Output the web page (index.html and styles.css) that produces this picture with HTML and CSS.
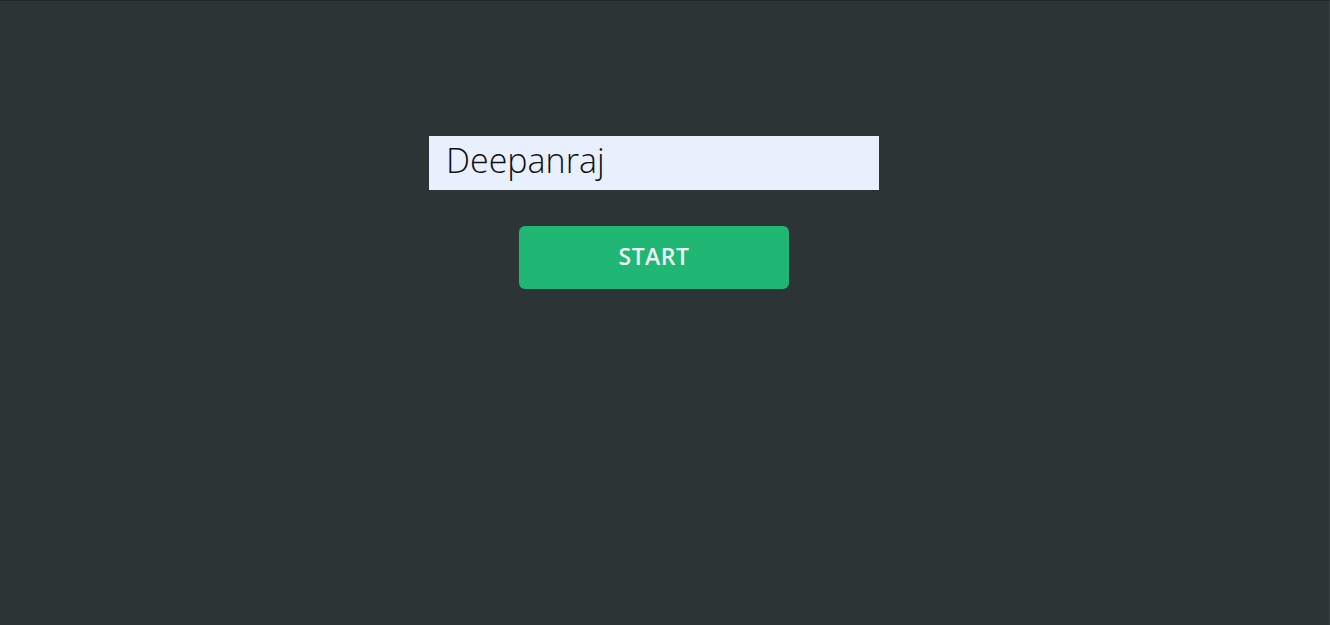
FILE: index.html
```html
<!DOCTYPE html>
<html>
<head>
<meta charset="utf-8">
<link rel="stylesheet" href="styles.css">
</head>
<body>
<main class="page">
  <form class="entry">
    <input class="name-input" type="text" value="Deepanraj">
    <button class="start-btn" type="button">START</button>
  </form>
</main>
</body>
</html>
```
FILE: styles.css
```css
html, body {
  margin: 0;
  padding: 0;
  height: 100%;
}
body {
  background: #2d3436;
  border-top: 1px solid #232829;
  border-right: 1px solid #3a4143;
  box-sizing: border-box;
  font-family: "Open Sans", "Noto Sans", sans-serif;
}
.page {
  display: flex;
  justify-content: center;
  padding-top: 135px;
  padding-right: 21px;
}
.entry {
  display: flex;
  flex-direction: column;
  align-items: center;
  gap: 36px;
  margin: 0;
}
.name-input {
  width: 450px;
  height: 54px;
  box-sizing: border-box;
  border: none;
  outline: none;
  background: #e8f0fe;
  padding: 0 0 6px 17px;
  font-family: "Open Sans", sans-serif;
  font-weight: 300;
  font-size: 34px;
  color: #111;
}
.start-btn {
  width: 270px;
  height: 63px;
  border: none;
  border-radius: 6px;
  background: #20b673;
  color: #eef6f1;
  font-family: "Open Sans", sans-serif;
  font-weight: 600;
  font-size: 23px;
  letter-spacing: 0.5px;
  padding: 0 0 4px 0;
  cursor: pointer;
}
```
